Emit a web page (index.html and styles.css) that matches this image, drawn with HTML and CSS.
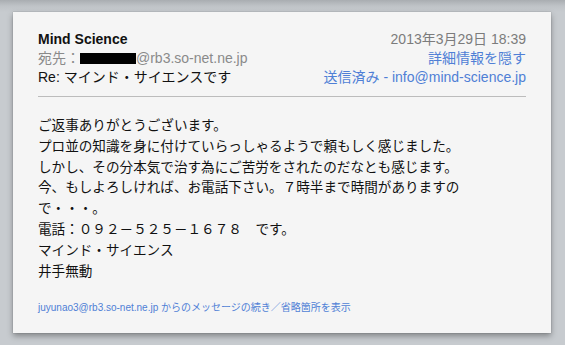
FILE: index.html
```html
<!DOCTYPE html>
<html lang="ja">
<head>
    <meta charset="UTF-8">
    <meta name="viewport" content="width=device-width, initial-scale=1.0">
    <title>Re: マインド・サイエンスです</title>
    <link rel="stylesheet" href="styles.css">
</head>
<body>
    <!-- Mail card -->
    <div class="mail">
        <div class="mail-header">
            <div class="header-left">
                <div class="sender">Mind Science</div>
                <div class="recipient">宛先：<span class="redacted"></span>@rb3.so-net.ne.jp</div>
                <div class="subject">Re: マインド・サイエンスです</div>
            </div>
            <div class="header-right">
                <div class="date">2013年3月29日 18:39</div>
                <div class="link">詳細情報を隠す</div>
                <div class="link">送信済み - info@mind-science.jp</div>
            </div>
        </div>

        <div class="mail-body">
            <p>ご返事ありがとうございます。</p>
            <p>プロ並の知識を身に付けていらっしゃるようで頼もしく感じました。</p>
            <p>しかし、その分本気で治す為にご苦労をされたのだなとも感じます。</p>
            <p>今、もしよろしければ、お電話下さい。７時半まで時間がありますの</p>
            <p>で・・・。</p>
            <p>電話：０９２－５２５－１６７８　です。</p>
            <p>マインド・サイエンス</p>
            <p>井手無動</p>
        </div>

        <div class="mail-footer">juyunao3@rb3.so-net.ne.jp からのメッセージの続き／省略箇所を表示</div>
    </div>
</body>
</html>
```

FILE: styles.css
```css
body {
    margin: 0;
    padding: 12px 14px 12px 13px;
    height: 345px;
    box-sizing: border-box;
    overflow: hidden;
    font-family: "Liberation Sans", "Noto Sans CJK JP", sans-serif;
    background: linear-gradient(#a9adb1 0, #bfc3c7 6px, #c7cbcf 12px);
}
.mail {
    background-color: #f5f5f5;
    height: 321px;
    box-sizing: border-box;
    padding: 18px 25px 0 25px;
    box-shadow: 0 3px 6px rgba(0, 0, 0, 0.35), 0 0 1px rgba(0, 0, 0, 0.3);
}
.mail-header {
    display: flex;
    justify-content: space-between;
    font-size: 14px;
    line-height: 19px;
    padding-bottom: 9px;
    border-bottom: 1px solid #bcbcbc;
}
.sender {
    font-weight: bold;
    color: #111;
}
.recipient {
    color: #8a8a8a;
}
.redacted {
    display: inline-block;
    width: 56px;
    height: 11px;
    background-color: #000;
    vertical-align: -1px;
}
.subject {
    color: #111;
}
.header-right {
    text-align: right;
}
.date {
    color: #7c7c7c;
}
.link {
    color: #4f7fd6;
}
.mail-body {
    padding-top: 17px;
    font-family: "Noto Sans CJK JP", sans-serif;
    font-size: 13.6px;
    line-height: 20.8px;
    color: #111;
}
.mail-body p {
    margin: 0;
}
.mail-footer {
    margin-top: 21px;
    font-size: 10px;
    line-height: 14px;
    color: #4f7fd6;
}
```
